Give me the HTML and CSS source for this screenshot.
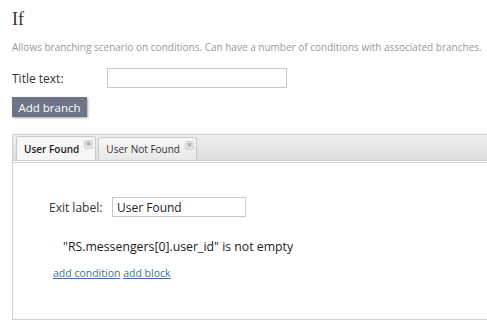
FILE: index.html
```html
<!DOCTYPE html>
<html>
<head>
<meta charset="utf-8">
<link rel="stylesheet" href="styles.css">
</head>
<body>
<div class="page">
  <h1 class="title">If</h1>
  <p class="desc">Allows branching scenario on conditions. Can have a number of conditions with associated branches.</p>
  <div class="row">
    <label class="lbl">Title text:</label>
    <input class="field title-field" type="text">
  </div>
  <button class="btn">Add branch</button>
  <div class="panel">
    <div class="tabbar">
      <div class="tab active"><span>User Found</span><span class="x">&#x2716;</span></div>
      <div class="tab"><span>User Not Found</span><span class="x">&#x2716;</span></div>
    </div>
    <div class="content">
      <div class="exit-row">
        <label class="exit-lbl">Exit label:</label>
        <input class="field exit-field" type="text" value="User Found">
      </div>
      <div class="cond">"RS.messengers[0].user_id" is not empty</div>
      <div class="links"><a href="#">add condition</a> <a href="#">add block</a></div>
    </div>
  </div>
</div>
</body>
</html>
```
FILE: styles.css
```css
html, body { margin: 0; padding: 0; background: #fff; }
body { font-family: "Open Sans", "Noto Sans", sans-serif; color: #333; overflow: hidden; }
.page { padding: 9px 0 0 12px; }
.title { font-family: "Liberation Serif", serif; font-weight: normal; font-size: 18px; line-height: 20px; margin: 0; color: #333; }
.desc { margin: 12px 0 0; font-size: 10px; color: #999; line-height: 12px; white-space: nowrap; }
.row { display: flex; align-items: center; margin-top: 15px; height: 20px; }
.lbl { font-size: 12px; width: 95px; color: #333; }
.field { box-sizing: border-box; border: 1px solid #c8c8d4; height: 20px; padding: 0 4px; font-family: "Open Sans", sans-serif; font-size: 12px; color: #222; outline: none; margin: 0; }
.title-field { width: 180px; }
.btn { display: block; margin-top: 9px; height: 20px; width: 75px; padding: 0; border: none; background: #6d7584; color: #fff; font-family: "Open Sans", sans-serif; font-size: 11.5px; box-shadow: 1px 1px 2px rgba(0,0,0,0.35); }
.panel { margin-top: 17px; border: 1px solid #d0d0d0; border-right: none; height: 186px; box-sizing: border-box; }
.tabbar { height: 25px; background: linear-gradient(#efefef, #dcdcdc); border-bottom: 1px solid #cfcfcf; box-shadow: 0 1px 0 #fff, 0 2px 0 #d6d6d6; display: flex; align-items: flex-end; padding-left: 3px; gap: 2px; }
.tab { height: 23px; display: flex; align-items: center; padding: 0 0 0 7px; border: 1px solid #c8c8c8; border-bottom: none; border-radius: 3px 3px 0 0; background: linear-gradient(#f7f7f7, #e8e8e8); font-size: 10px; color: #333; box-sizing: border-box; white-space: nowrap; }
.tab.active { background: #f6f6f6; height: 24px; font-weight: 600; color: #222; }
.tab .x { font-size: 6px; color: #aaa; background: #e4e4e4; border: 1px solid #d2d2d2; border-radius: 2px; width: 7px; height: 7px; line-height: 7px; text-align: center; margin: -8px 2px 0 5px; font-weight: normal; }
.content { padding: 36px 0 0 36px; }
.exit-row { display: flex; align-items: center; height: 20px; }
.exit-lbl { font-size: 12px; width: 63px; color: #333; }
.exit-field { width: 134px; }
.cond { margin: 21px 0 0 14px; font-size: 12.3px; color: #222; }
.links { margin: 11px 0 0 4px; font-size: 10.5px; }
.links a { color: #3d6db2; text-decoration: underline; }
```
